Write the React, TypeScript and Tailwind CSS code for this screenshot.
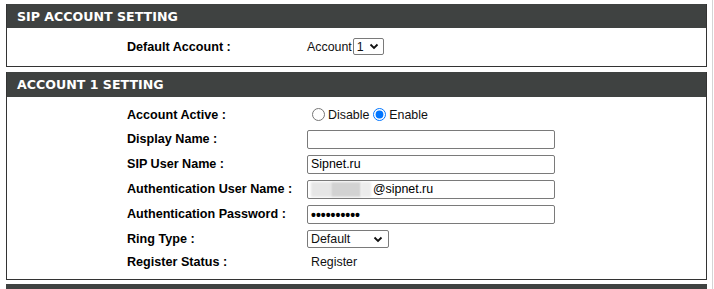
import React from "react";

const font = { fontFamily: '"Liberation Sans", Arial, sans-serif' };

function Chevron() {
  return (
    <svg width="10" height="7" viewBox="0 0 10 7" className="shrink-0">
      <path d="M1.5 1.5 L5 5 L8.5 1.5" fill="none" stroke="#111" strokeWidth="1.8" />
    </svg>
  );
}

function Header({ title, h }: { title: string; h: string }) {
  return (
    <div
      className={`${h} bg-[#3f4241] flex items-center pl-[10px] pt-[2px] text-white text-[12.6px] font-bold`}
      style={{ fontFamily: '"DejaVu Sans", Verdana, sans-serif' }}
    >
      {title}
    </div>
  );
}

function Row({ label, h = "h-[25px]", children }: { label: string; h?: string; children: React.ReactNode }) {
  return (
    <div className={`flex items-center ${h}`}>
      <div className="w-[180px] pl-[120px] box-content shrink-0 whitespace-nowrap font-bold text-[12.6px] text-black">
        {label}
      </div>
      <div className="flex items-center text-[12.4px] text-[#111]">{children}</div>
    </div>
  );
}

function TextBox({ children }: { children?: React.ReactNode }) {
  return (
    <div className="w-[248px] h-[19px] border border-[#7a7a7a] rounded-[2px] bg-white flex items-center pl-[3px] text-[12.4px] text-black overflow-hidden">
      {children}
    </div>
  );
}

export default function App() {
  return (
    <div className="w-[713px] h-[289px] bg-white border-r border-[#d4d4d4] overflow-hidden pt-[4px]" style={font}>
      {/* SIP account setting */}
      <div className="ml-[6px] w-[701px] border-x border-b border-[#333]">
        <Header title="SIP ACCOUNT SETTING" h="h-[24px]" />
        <div className="h-[38px] flex items-center">
          <Row label="Default Account :" h="h-[38px]">
            <span>Account</span>
            <div className="ml-[1px] w-[31px] h-[17px] border border-[#7a7a7a] rounded-[2px] flex items-center justify-between pl-[3px] pr-[4px]">
              <span>1</span>
              <Chevron />
            </div>
          </Row>
        </div>
      </div>

      {/* Account 1 setting */}
      <div className="mt-[5px] ml-[6px] w-[701px] border-x border-b border-[#333]">
        <Header title="ACCOUNT 1 SETTING" h="h-[25px]" />
        <div className="pt-[6px] pb-[6px]">
          <Row label="Account Active :" h="h-[24px]">
            <label className="flex items-center">
              <input type="radio" name="active" className="m-0 ml-[5px] mr-[3px] w-[13px] h-[13px]" />
              Disable
            </label>
            <label className="flex items-center">
              <input type="radio" name="active" defaultChecked className="m-0 ml-[4px] mr-[3px] w-[13px] h-[13px]" />
              Enable
            </label>
          </Row>
          <Row label="Display Name :">
            <TextBox />
          </Row>
          <Row label="SIP User Name :">
            <TextBox>Sipnet.ru</TextBox>
          </Row>
          <Row label="Authentication User Name :">
            <TextBox>
              <span className="w-[20px] h-[15px] bg-[#e6e6e6] blur-[1px]" />
              <span className="w-[30px] h-[15px] bg-[#d2d2d2] blur-[1px]" />
              <span className="w-[10px] h-[15px] bg-[#ececec] blur-[1px]" />
              <span className="ml-[2px]">@sipnet.ru</span>
            </TextBox>
          </Row>
          <Row label="Authentication Password :">
            <TextBox>
              <span className="text-[14px] font-bold leading-none">••••••••••</span>
            </TextBox>
          </Row>
          <Row label="Ring Type :" h="h-[24px]">
            <div className="w-[82px] h-[18px] border border-[#7a7a7a] rounded-[2px] flex items-center justify-between pl-[3px] pr-[5px]">
              <span>Default</span>
              <Chevron />
            </div>
          </Row>
          <Row label="Register Status :" h="h-[22px]">
            <span className="pl-[4px]">Register</span>
          </Row>
        </div>
      </div>

      <div className="mt-[4px] ml-[6px] w-[701px] h-[10px] bg-[#3f4241]" />
    </div>
  );
}
